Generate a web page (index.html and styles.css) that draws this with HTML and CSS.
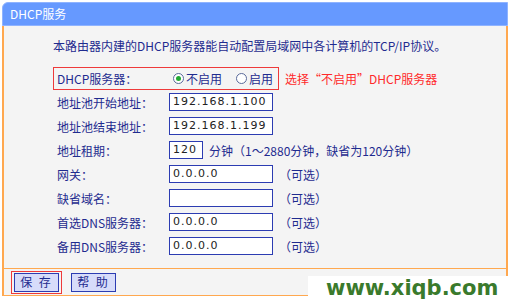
FILE: index.html
```html
<!DOCTYPE html>
<html lang="zh">
<head>
    <meta charset="UTF-8">
    <title>DHCP服务</title>
    <link rel="stylesheet" href="styles.css">
</head>
<body>
    <div class="panel">
        <div class="panel-head">DHCP服务</div>
        <div class="panel-body">
            <p class="intro">本路由器内建的DHCP服务器能自动配置局域网中各计算机的TCP/IP协议。</p>

            <div class="switch-line">
                <div class="switch-box">
                    <span class="label">DHCP服务器：</span>
                    <span class="radio on"></span><span class="opt">不启用</span>
                    <span class="radio"></span><span class="opt">启用</span>
                </div>
                <span class="hint">选择“不启用”DHCP服务器</span>
            </div>

            <div class="row">
                <span class="label">地址池开始地址：</span>
                <span class="field">192.168.1.100</span>
            </div>
            <div class="row">
                <span class="label">地址池结束地址：</span>
                <span class="field">192.168.1.199</span>
            </div>
            <div class="row">
                <span class="label">地址租期：</span>
                <span class="field short">120</span>
                <span class="note">分钟（1～2880分钟，缺省为120分钟）</span>
            </div>
            <div class="row">
                <span class="label">网关：</span>
                <span class="field">0.0.0.0</span>
                <span class="note">（可选）</span>
            </div>
            <div class="row">
                <span class="label">缺省域名：</span>
                <span class="field"></span>
                <span class="note">（可选）</span>
            </div>
            <div class="row">
                <span class="label">首选DNS服务器：</span>
                <span class="field">0.0.0.0</span>
                <span class="note">（可选）</span>
            </div>
            <div class="row">
                <span class="label">备用DNS服务器：</span>
                <span class="field">0.0.0.0</span>
                <span class="note">（可选）</span>
            </div>
        </div>
        <div class="panel-foot">
            <span class="mark"><button class="btn">保 存</button></span>
            <button class="btn">帮 助</button>
        </div>
    </div>
    <div class="watermark">www.xiqb.com</div>
</body>
</html>
```

FILE: styles.css
```css
body {
    margin: 0;
    background: #fff;
    font-family: "Noto Sans CJK SC", "DejaVu Sans", sans-serif;
    font-size: 12px;
    color: #1f2b8f;
    position: relative;
    width: 510px;
    height: 299px;
    overflow: hidden;
    white-space: nowrap;
}
.panel {
    margin: 2px 2px 0 2px;
    width: 506px;
}
.panel-head {
    height: 24px;
    line-height: 22px;
    background: #6699ff;
    border: 1px solid #8fb3ff;
    border-radius: 6px 0 0 0;
    color: #fff;
    padding-left: 7px;
    box-sizing: border-box;
}
.panel-body {
    background: #f4f4f4;
    border-left: 2px solid #ffa84f;
    border-right: 2px solid #ffa84f;
    height: 242px;
    padding: 12px 0 0 49px;
    box-sizing: border-box;
}
.intro {
    margin: 0;
    line-height: 16px;
}
.switch-line {
    display: flex;
    align-items: center;
    margin-top: 13px;
}
.switch-box {
    display: flex;
    align-items: center;
    width: 226px;
    height: 23px;
    border: 1px solid #ee3a3a;
    box-sizing: border-box;
    padding-left: 3px;
}
.switch-box .label {
    width: 116px;
}
.radio {
    width: 11px;
    height: 11px;
    flex-shrink: 0;
    border: 1px solid #5a6a9a;
    border-radius: 50%;
    background: #fff;
    box-sizing: border-box;
    margin-right: 2px;
    position: relative;
}
.radio.on::after {
    content: "";
    position: absolute;
    left: 2px;
    top: 2px;
    width: 5px;
    height: 5px;
    border-radius: 50%;
    background: #22aa33;
}
.opt {
    flex-shrink: 0;
    margin-right: 14px;
}
.hint {
    color: #ff2a2a;
    margin-left: 6px;
}
.row {
    display: flex;
    align-items: center;
    height: 24px;
    padding-left: 4px;
}
.row:first-of-type {
    margin-top: -1px;
}
.label {
    width: 112px;
    flex-shrink: 0;
}
.field {
    width: 104px;
    height: 18px;
    flex-shrink: 0;
    line-height: 16px;
    border: 1px solid #2c3cb2;
    background: #fff;
    box-sizing: border-box;
    padding-left: 3px;
    color: #222;
    font-family: "DejaVu Sans", sans-serif;
    font-size: 11px;
    letter-spacing: 1px;
}
.field.short {
    width: 34px;
}
.note {
    margin-left: 6px;
}
.panel-foot {
    border: 2px solid #ffa84f;
    border-top-width: 1px;
    border-bottom-width: 1px;
    background: #f4f4f4;
    height: 28px;
    box-sizing: border-box;
    display: flex;
    align-items: center;
    padding-left: 7px;
    gap: 9px;
}
.mark {
    border: 1px solid #ee3a3a;
    padding: 1px 2px;
    display: flex;
}
.btn {
    width: 45px;
    height: 19px;
    padding: 0;
    background: #d7dcfa;
    border: 1px solid #2c3cb2;
    color: #1f2b8f;
    font-family: "Noto Sans CJK SC", sans-serif;
    font-size: 12px;
    line-height: 16px;
    letter-spacing: 2px;
}
.watermark {
    position: absolute;
    left: 308px;
    top: 276px;
    width: 202px;
    height: 23px;
    background: #fff;
    color: #3a7a2c;
    font-family: "DejaVu Sans", sans-serif;
    font-weight: bold;
    font-size: 21px;
    line-height: 25px;
    padding-left: 18px;
    box-sizing: border-box;
}
```
